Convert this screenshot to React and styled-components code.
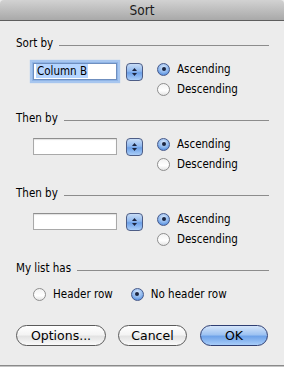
import React from "react";
import styled, { createGlobalStyle, css } from "styled-components";

const Global = createGlobalStyle`
  html, body { margin: 0; padding: 0; background: #ececec; }
  body { font-family: "DejaVu Sans Condensed", "DejaVu Sans", sans-serif; }
`;

const Window = styled.div`
  position: relative;
  width: 284px;
  height: 367px;
  background: #ececec;
  display: flex;
  flex-direction: column;
  overflow: hidden;
  box-sizing: border-box;
  border-bottom: 1px solid #c4c4c4;
`;

const TitleBar = styled.div`
  height: 20px;
  flex: none;
  background: linear-gradient(#d2d2d2, #a9a9a9);
  border-bottom: 1px solid #5e5e5e;
  border-top-left-radius: 4px;
  border-top-right-radius: 4px;
  display: flex;
  align-items: center;
  justify-content: center;
  font-size: 13.5px;
  color: #1a1a1a;
  line-height: 20px;
`;

const Body = styled.div`
  flex: 1;
  padding: 15px 15px 0 16px;
  display: flex;
  flex-direction: column;
  border-bottom: 1px solid #8a8a8a;
`;

const Section = styled.div`
  display: flex;
  flex-direction: column;
  gap: 9px;
  margin-bottom: 12px;
`;

const Header = styled.div`
  display: flex;
  align-items: baseline;
  gap: 6px;
  font-size: 11.5px;
  line-height: 14px;
  color: #000;
`;

const Rule = styled.div`
  flex: 1;
  height: 1px;
  background: #8c8c8c;
  position: relative;
  top: -1px;
`;

const SortRow = styled.div`
  display: flex;
  align-items: flex-start;
  padding-left: 16px;
`;

const FieldGroup = styled.div`
  display: flex;
  align-items: center;
  gap: 8px;
  margin-top: 3px;
  margin-right: 14px;
`;

const Field = styled.div`
  width: 84px;
  height: 17px;
  box-sizing: border-box;
  background: #fff;
  border: 1px solid #a9a9a9;
  border-top-color: #8e8e8e;
  box-shadow: inset 0 1px 1px rgba(0, 0, 0, 0.12);
  font-size: 11.5px;
  line-height: 15px;
  padding-left: 2px;
  color: #000;
  margin: 1px;
  ${(p) =>
    p.$focused &&
    css`
      border-color: #6f8fbf;
      box-shadow: 0 0 0 1px #8fb4e6, 0 0 1px 3px #a7c6ef;
    `}
`;

const Selected = styled.span`
  background: #b5d5ff;
  padding: 0 1px;
`;

const Stepper = styled.div`
  width: 17px;
  height: 18px;
  box-sizing: border-box;
  border: 1px solid #4d5d86;
  border-radius: 4px;
  background: linear-gradient(#c7dcf6 0%, #90b8ee 45%, #6c9fe6 55%, #a9cdf8 100%);
  display: flex;
  align-items: center;
  justify-content: center;
`;

const RadioColumn = styled.div`
  display: flex;
  flex-direction: column;
`;

const RadioRow = styled.div`
  display: flex;
  align-items: center;
  gap: 7px;
  height: 20px;
  font-size: 11.5px;
  color: #000;
`;

const Circle = styled.span`
  width: 13px;
  height: 13px;
  box-sizing: border-box;
  border-radius: 50%;
  flex: none;
  display: flex;
  align-items: center;
  justify-content: center;
  ${(p) =>
    p.$on
      ? css`
          border: 1px solid #46598a;
          background: radial-gradient(circle at 50% 30%, #d6e6fb 0%, #8bb5ec 55%, #5b92e0 80%, #9dc4f5 100%);
        `
      : css`
          border: 1px solid #8e8e8e;
          background: linear-gradient(#f2f2f2, #ffffff 60%, #e4e4e4);
        `}
`;

const Dot = styled.span`
  width: 4px;
  height: 4px;
  border-radius: 50%;
  background: #1b2540;
`;

const OptionRow = styled.div`
  display: flex;
  padding-left: 17px;
  gap: 18px;
`;

const Buttons = styled.div`
  display: flex;
  margin-top: 9px;
`;

const Button = styled.div`
  height: 21px;
  box-sizing: border-box;
  width: ${(p) => p.$w}px;
  margin-right: ${(p) => p.$mr || 0}px;
  border-radius: 11px;
  border: 1px solid #5a5a5a;
  background: linear-gradient(#ffffff 0%, #f4f4f4 45%, #e3e3e3 55%, #fafafa 100%);
  display: flex;
  align-items: center;
  justify-content: center;
  font-family: "DejaVu Sans", sans-serif;
  font-size: 12.5px;
  color: #000;
  ${(p) =>
    p.$default &&
    css`
      border-color: #2f3f73;
      background: linear-gradient(#d5e5fa 0%, #9ec3f2 45%, #6fa3e9 55%, #a8cdf9 100%);
    `}
`;

function StepperArrows() {
  return (
    <svg width="7" height="10" viewBox="0 0 7 10">
      <path d="M3.5 1 L6 4 L1 4 Z" fill="#1c2540" />
      <path d="M3.5 9 L6 6 L1 6 Z" fill="#1c2540" />
    </svg>
  );
}

function Radio({ on, label }) {
  return (
    <RadioRow>
      <Circle $on={on}>{on && <Dot />}</Circle>
      {label}
    </RadioRow>
  );
}

function SortSection({ title, value, focused }) {
  return (
    <Section>
      <Header>
        {title}
        <Rule />
      </Header>
      <SortRow>
        <FieldGroup>
          <Field $focused={focused}>{value && <Selected>{value}</Selected>}</Field>
          <Stepper>
            <StepperArrows />
          </Stepper>
        </FieldGroup>
        <RadioColumn>
          <Radio on label="Ascending" />
          <Radio label="Descending" />
        </RadioColumn>
      </SortRow>
    </Section>
  );
}

export default function App() {
  return (
    <>
      <Global />
      <Window>
        <TitleBar>Sort</TitleBar>
        <Body>
          <SortSection title="Sort by" value="Column B" focused />
          <SortSection title="Then by" />
          <SortSection title="Then by" />
          <Section>
            <Header>
              My list has
              <Rule />
            </Header>
            <OptionRow>
              <Radio label="Header row" />
              <Radio on label="No header row" />
            </OptionRow>
          </Section>
          <Buttons>
            <Button $w={90} $mr={12}>Options...</Button>
            <Button $w={69} $mr={13}>Cancel</Button>
            <Button $w={68} $default>OK</Button>
          </Buttons>
        </Body>
      </Window>
    </>
  );
}
